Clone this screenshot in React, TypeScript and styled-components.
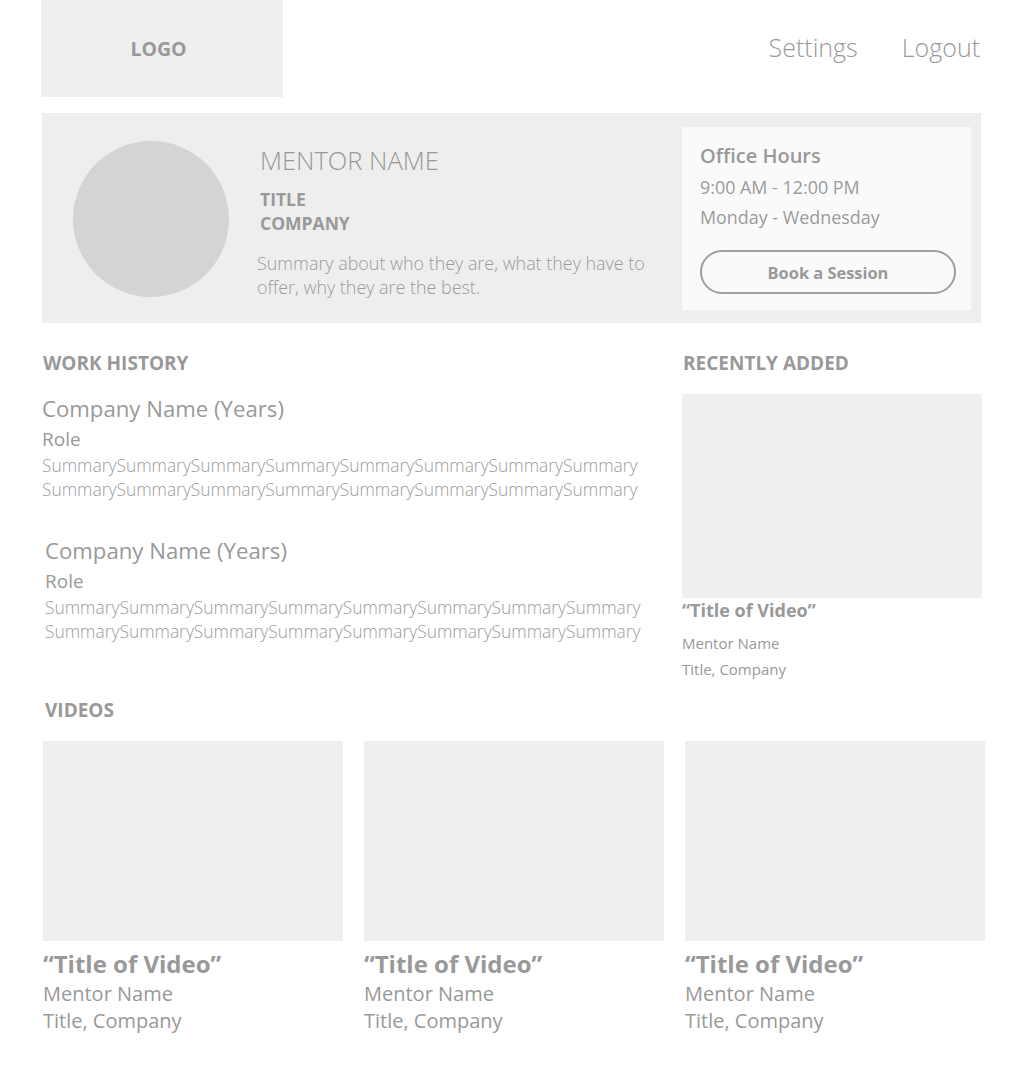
import React from 'react'
import styled, { createGlobalStyle } from 'styled-components'

const GlobalStyle = createGlobalStyle`
  body {
    margin: 0;
    background: #ffffff;
    font-family: 'Open Sans', 'Liberation Sans', sans-serif;
    color: #9b9b9b;
  }
  p, h1, h2, h3 {
    margin: 0;
  }
`

const Page = styled.div`
  width: 944px;
  margin-left: 41px;
  padding-bottom: 40px;
`

const Header = styled.header`
  display: flex;
  justify-content: space-between;
  align-items: center;
  height: 97px;
  padding-right: 5px;
`

const LogoBox = styled.div`
  width: 242px;
  height: 97px;
  box-sizing: border-box;
  padding-right: 7px;
  background: #efefef;
  display: flex;
  align-items: center;
  justify-content: center;
  font-size: 19.5px;
  font-weight: 700;
  color: #999;
`

const Nav = styled.nav`
  display: flex;
  gap: 44px;
  padding-bottom: 4px;
`

const NavLink = styled.a`
  font-size: 25px;
  font-weight: 300;
  color: #999;
  text-decoration: none;
  cursor: pointer;
`

const Hero = styled.section`
  display: flex;
  margin: 16px 4px 0 1px;
  height: 210px;
  background: #eeeeee;
  box-sizing: border-box;
  padding: 14px 10px 13px 31px;
`

const Avatar = styled.div`
  flex: none;
  width: 156px;
  height: 156px;
  margin-top: 14px;
  border-radius: 50%;
  background: #d4d4d4;
`

const Profile = styled.div`
  flex: 1;
  padding: 17px 0 0 31px;
`

const MentorName = styled.h1`
  font-size: 25.5px;
  line-height: 32px;
  font-weight: 300;
  color: #999;
`

const Caps = styled.p`
  font-size: 17.5px;
  line-height: 24px;
  font-weight: 700;
  color: #999;
`

const CapsGroup = styled.div`
  margin-top: 11px;
`

const Summary = styled.p`
  margin: 16px 0 0 -3px !important;
  width: 400px;
  font-size: 17.9px;
  line-height: 24px;
  font-weight: 300;
  color: #9b9b9b;
`

const OfficeBox = styled.aside`
  flex: none;
  width: 289px;
  box-sizing: border-box;
  background: #fafafa;
  padding: 16px 15px 0 18px;
`

const OfficeTitle = styled.h2`
  font-size: 20px;
  line-height: 26px;
  font-weight: 600;
  color: #999;
`

const OfficeLine = styled.p`
  font-size: 17.9px;
  line-height: 30px;
  font-weight: 400;
  color: #9b9b9b;
  &:first-of-type {
    margin-top: 3px;
  }
`

const BookButton = styled.button`
  display: block;
  width: 256px;
  height: 44px;
  margin-top: 18px;
  border: 2px solid #9e9e9e;
  border-radius: 22px;
  background: transparent;
  font-family: inherit;
  font-size: 16.4px;
  font-weight: 700;
  color: #999;
  cursor: pointer;
`

const Columns = styled.div`
  display: grid;
  grid-template-columns: minmax(0, 1fr) 300px;
  column-gap: 42px;
  margin-top: 28px;
  padding-right: 3px;
`

const SectionTitle = styled.h3<{ $shift?: number }>`
  font-size: 19px;
  line-height: 24px;
  font-weight: 700;
  color: #999;
  margin-left: ${(p) => p.$shift ?? 0}px !important;
`

const Job = styled.div<{ $shift?: number }>`
  margin-top: ${(p) => (p.$shift ? 35 : 19)}px;
  margin-left: ${(p) => 1 + (p.$shift ?? 0)}px;
`

const JobCompany = styled.p`
  font-size: 22.2px;
  line-height: 30px;
  font-weight: 400;
  color: #999;
`

const JobRole = styled.p`
  margin-top: 2px !important;
  font-size: 19px;
  line-height: 26px;
  font-weight: 400;
  color: #999;
`

const JobSummary = styled.p`
  margin-top: 1px !important;
  font-size: 17.4px;
  line-height: 24px;
  font-weight: 300;
  color: #9b9b9b;
  white-space: pre;
`

const Thumb = styled.div<{ $height: number }>`
  width: 300px;
  height: ${(p) => p.$height}px;
  background: #efefef;
`

const SideThumb = styled(Thumb)`
  margin-top: 19px;
`

const SmallTitle = styled.p`
  font-size: 18px;
  line-height: 24px;
  font-weight: 700;
  color: #999;
`

const SmallMeta = styled.p<{ $first?: boolean }>`
  font-size: 15px;
  line-height: 26px;
  font-weight: 400;
  color: #999;
  margin-top: ${(p) => (p.$first ? 8 : 0)}px !important;
`

const VideosSection = styled.section`
  margin-top: 16px;
`

const VideoGrid = styled.div`
  display: grid;
  grid-template-columns: repeat(3, 300px);
  column-gap: 21px;
  margin: 19px 0 0 2px;
`

const VideoCard = styled.div``

const VideoTitle = styled.p`
  margin-top: 8px !important;
  font-size: 24px;
  line-height: 30px;
  font-weight: 700;
  color: #999;
`

const VideoMeta = styled.p`
  font-size: 20px;
  line-height: 27px;
  font-weight: 400;
  color: #999;
  &:nth-of-type(2) {
    margin-top: 1px;
  }
`

const jobs = [{ shift: 0 }, { shift: 3 }]

const word = 'Summary'.repeat(8)
const summaryText = `${word}\n${word}`

export default function App() {
  return (
    <>
      <GlobalStyle />
      <Page>
        <Header>
          <LogoBox>LOGO</LogoBox>
          <Nav>
            <NavLink>Settings</NavLink>
            <NavLink>Logout</NavLink>
          </Nav>
        </Header>

        <Hero>
          <Avatar />
          <Profile>
            <MentorName>MENTOR NAME</MentorName>
            <CapsGroup>
              <Caps>TITLE</Caps>
              <Caps>COMPANY</Caps>
            </CapsGroup>
            <Summary>
              Summary about who they are, what they have to offer, why they are
              the best.
            </Summary>
          </Profile>
          <OfficeBox>
            <OfficeTitle>Office Hours</OfficeTitle>
            <OfficeLine>9:00 AM - 12:00 PM</OfficeLine>
            <OfficeLine>Monday - Wednesday</OfficeLine>
            <BookButton>Book a Session</BookButton>
          </OfficeBox>
        </Hero>

        <Columns>
          <div>
            <SectionTitle $shift={2}>WORK HISTORY</SectionTitle>
            {jobs.map((job, i) => (
              <Job key={i} $shift={job.shift}>
                <JobCompany>Company Name (Years)</JobCompany>
                <JobRole>Role</JobRole>
                <JobSummary>{summaryText}</JobSummary>
              </Job>
            ))}
          </div>
          <div>
            <SectionTitle $shift={1}>RECENTLY ADDED</SectionTitle>
            <SideThumb $height={204} />
            <SmallTitle>“Title of Video”</SmallTitle>
            <SmallMeta $first>Mentor Name</SmallMeta>
            <SmallMeta>Title, Company</SmallMeta>
          </div>
        </Columns>

        <VideosSection>
          <SectionTitle $shift={4}>VIDEOS</SectionTitle>
          <VideoGrid>
            {[0, 1, 2].map((n) => (
              <VideoCard key={n}>
                <Thumb $height={200} />
                <VideoTitle>“Title of Video”</VideoTitle>
                <VideoMeta>Mentor Name</VideoMeta>
                <VideoMeta>Title, Company</VideoMeta>
              </VideoCard>
            ))}
          </VideoGrid>
        </VideosSection>
      </Page>
    </>
  )
}
